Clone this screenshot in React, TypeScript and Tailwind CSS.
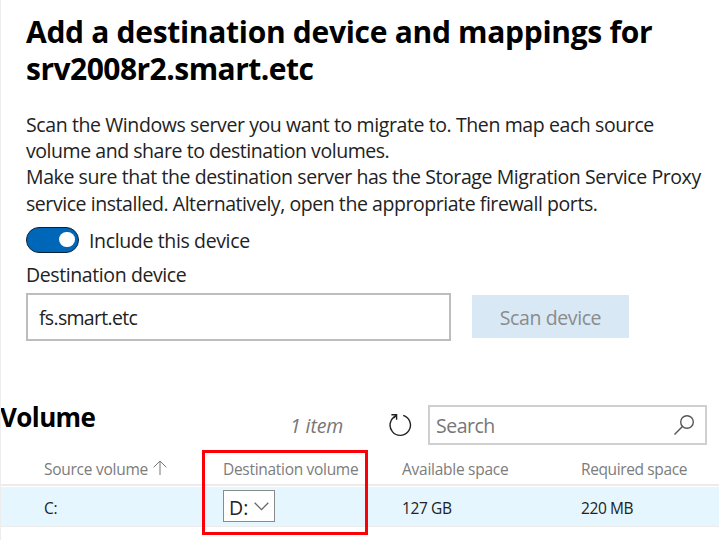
import React from "react";

const columns = [
  { title: "Source volume", width: "w-[179px]", tracking: "tracking-[-0.26px]", sorted: true },
  { title: "Destination volume", width: "w-[179px]", tracking: "tracking-[-0.3px]" },
  { title: "Available space", width: "w-[179px]", tracking: "tracking-[-0.26px]" },
  { title: "Required space", width: "w-[138px]", tracking: "tracking-[-0.38px]" },
];

function Toggle() {
  return (
    <span
      role="switch"
      aria-checked="true"
      className="flex h-[26px] w-[53px] items-center justify-end rounded-full border border-[#0b2238] bg-[#0067b8] pr-[3px]"
    >
      <span className="h-[15px] w-4 rounded-full bg-white" />
    </span>
  );
}

function RefreshIcon() {
  return (
    <svg width="24" height="26" viewBox="0 0 24 26" fill="none" stroke="#222" strokeWidth="1.4">
      <path d="M15.2 3.4A10.2 10.2 0 1 1 8 3.9" />
      <path d="M3.4 2.8H8.6V7.8M8.6 2.8L5.6 6" />
    </svg>
  );
}

function SearchIcon() {
  return (
    <svg width="22" height="22" viewBox="0 0 22 22" fill="none" stroke="#555" strokeWidth="1.4">
      <circle cx="14" cy="8" r="6.3" />
      <path d="M9.4 12.6L1.5 20.5" />
    </svg>
  );
}

export default function App() {
  return (
    <main className="flex h-[540px] w-[719px] flex-col overflow-hidden border-l border-[#ededed] bg-white font-['Open_Sans',sans-serif] text-[#222]">
      <section className="pl-[25px]">
        <h1 className="mt-[13px] text-[30px] leading-[37px] font-bold whitespace-nowrap text-black">
          <span className="block w-max tracking-[-0.3px]">Add a destination device and mappings for</span>
          <span className="block w-max tracking-[-0.53px]">srv2008r2.smart.etc</span>
        </h1>
        <p className="mt-[25px] text-[19.5px] leading-[26.2px] whitespace-nowrap">
          <span className="block w-max tracking-[-0.4px]">Scan the Windows server you want to migrate to. Then map each source</span>
          <span className="block w-max tracking-[-0.45px]">volume and share to destination volumes.</span>
          <span className="block w-max tracking-[-0.41px]">Make sure that the destination server has the Storage Migration Service Proxy</span>
          <span className="block w-max tracking-[-0.44px]">service installed. Alternatively, open the appropriate firewall ports.</span>
        </p>
        <div className="mt-[10px] flex h-[26px] items-center gap-[10px] text-[19.5px]">
          <Toggle />
          <span className="pt-px tracking-[-0.36px]">Include this device</span>
        </div>
        <div className="mt-[9px] flex h-[26px] items-center text-[19.5px]">
          <span className="tracking-[-0.4px]">Destination device</span>
        </div>
        <div className="mt-[5px] flex items-center gap-[21px] text-[19.5px]">
          <div className="flex h-12 w-[425px] items-center border-2 border-[#bdbdbd] pt-[2px] pl-[11px]">
            <span className="tracking-[-0.7px]">fs.smart.etc</span>
          </div>
          <button className="flex h-[43px] w-[157px] items-center justify-center bg-[#d9e8f5] pt-[2px] text-[#8b8b8b]">
            <span className="tracking-[-0.4px]">Scan device</span>
          </button>
        </div>
      </section>

      <section className="mt-[64px]">
        <div className="flex h-10 items-center">
          <h2 className="-ml-px w-[290px] -translate-y-[7px] text-[26px] font-bold text-black">
            <span className="tracking-[-0.6px]">Volume</span>
          </h2>
          <span className="w-[98px] pt-[2px] text-[19.5px] text-[#777] italic">
            <span className="tracking-[-0.1px]">1 item</span>
          </span>
          <RefreshIcon />
          <div className="ml-4 flex h-10 w-[279px] items-center justify-between border-2 border-[#cfcfcf] pr-[10px] pl-[6px] text-[19.5px] text-[#777]">
            <span className="pt-px tracking-[-0.5px]">Search</span>
            <SearchIcon />
          </div>
        </div>

        <div className="relative">
          <div className="flex h-[41px] items-center border-b-2 border-[#ececec] pt-[10px] pl-[43px] text-[15.5px] text-[#7c7c7c]">
            {columns.map((c) => (
              <div key={c.title} className={`flex items-center gap-[5px] whitespace-nowrap ${c.width}`}>
                <span className={c.tracking}>{c.title}</span>
                {c.sorted && (
                  <svg width="14" height="16" viewBox="0 0 14 16" fill="none" stroke="#777" className="-translate-y-px">
                    <path d="M7 15V1M0.7 7.3L7 1L13.3 7.3" />
                  </svg>
                )}
              </div>
            ))}
          </div>
          <div className="mt-px flex h-[40px] items-center border-b border-[#ececec] bg-[#e5f6fe] pl-[43px] text-[15.5px]">
            <span className="w-[179px] pt-[4px] tracking-[-0.3px]">C:</span>
            <div className="w-[179px]">
              <div className="flex h-8 w-[52px] items-center justify-between border border-[#8a8a8a] bg-white pr-[5px] pl-[5px] text-[19.5px]">
                <span className="pt-[2px]">D:</span>
                <svg width="15" height="9" viewBox="0 0 15 9" fill="none" stroke="#666" strokeWidth="1.3">
                  <path d="M0.7 0.8L7.5 7.6L14.3 0.8" />
                </svg>
              </div>
            </div>
            <span className="w-[179px] pt-[4px] tracking-[-0.4px]">127 GB</span>
            <span className="pt-[4px] tracking-[-0.4px]">220 MB</span>
          </div>
          <div className="absolute top-[5px] left-[201px] h-[85px] w-[166px] border-3 border-[#fb0007]" />
        </div>
      </section>
    </main>
  );
}
